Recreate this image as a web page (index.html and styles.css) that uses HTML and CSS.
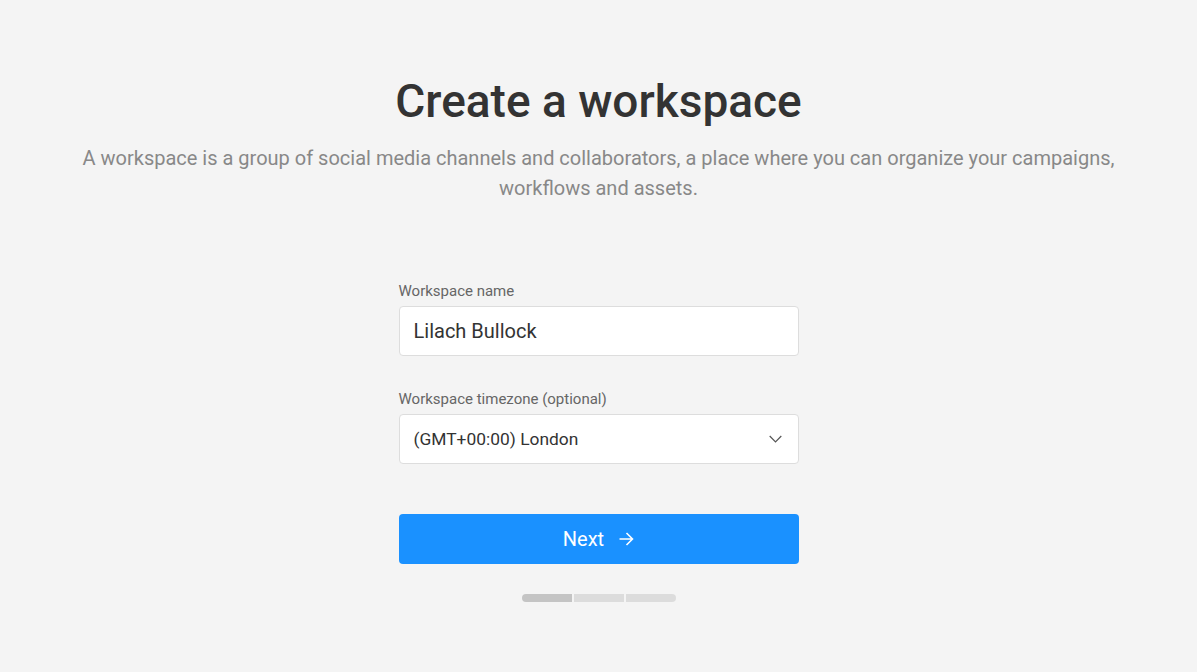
FILE: index.html
```html
<!DOCTYPE html>
<html lang="en">

<head>
    <meta charset="utf-8">
    <meta name="viewport" content="width=device-width, initial-scale=1.0">
    <title>Create a workspace</title>
    <link rel="stylesheet" href="styles.css">
</head>

<body>
    <div class="page">
        <h1>Create a workspace</h1>
        <p class="intro">A workspace is a group of social media channels and collaborators, a place where you can organize your campaigns, workflows and assets.</p>

        <form class="form">
            <div class="field">
                <label for="name">Workspace name</label>
                <input id="name" type="text" class="input" value="Lilach Bullock">
            </div>
            <div class="field">
                <label for="tz">Workspace timezone (optional)</label>
                <div class="select">
                    <span>(GMT+00:00) London</span>
                    <svg width="13" height="8" viewBox="0 0 13 8">
                        <path d="M0.7 1l5.8 6 5.8-6" fill="none" stroke="#555" stroke-width="1.2"/>
                    </svg>
                </div>
            </div>
            <button type="button" class="next">
                Next
                <svg width="16" height="16" viewBox="0 0 16 16">
                    <path d="M1.5 8h13M8.5 2l6 6-6 6" fill="none" stroke="#fff" stroke-width="1.6"/>
                </svg>
            </button>
        </form>

        <div class="steps">
            <span class="step done"></span>
            <span class="step"></span>
            <span class="step"></span>
        </div>
    </div>
</body>

</html>
```

FILE: styles.css
```css
* {
    margin: 0;
    padding: 0;
    box-sizing: border-box;
    font-family: Roboto, "Liberation Sans", sans-serif;
}

body {
    background: #f4f4f4;
    color: #333;
}

.page {
    display: flex;
    flex-direction: column;
    align-items: center;
    padding-top: 73px;
    text-align: center;
}

h1 {
    font-size: 46px;
    font-weight: 500;
    color: #333;
    line-height: 56px;
}

.intro {
    width: 1060px;
    margin-top: 14px;
    font-size: 20px;
    line-height: 30px;
    color: #888;
}

.form {
    width: 400px;
    margin-top: 79px;
    text-align: left;
}

.field {
    margin-bottom: 34px;
}

.field label {
    display: block;
    font-size: 15px;
    line-height: 18px;
    color: #666;
    margin-bottom: 6px;
}

.input,
.select {
    width: 100%;
    height: 50px;
    background: #fff;
    border: 1px solid #ddd;
    border-radius: 4px;
    padding: 0 14px;
    font-size: 20px;
    color: #333;
    outline: none;
}

.select {
    display: flex;
    align-items: center;
    justify-content: space-between;
    font-size: 17.4px;
}

.select svg {
    margin-right: 2px;
}

.next {
    width: 100%;
    height: 50px;
    margin-top: 50px;
    border: none;
    border-radius: 4px;
    background: #1a91ff;
    color: #fff;
    font-size: 20px;
    display: flex;
    align-items: center;
    justify-content: center;
    gap: 14px;
    cursor: pointer;
}

.steps {
    display: flex;
    gap: 2px;
    margin-top: 30px;
}

.step {
    width: 50px;
    height: 8px;
    background: #dcdcdc;
}

.step:first-child {
    border-radius: 4px 0 0 4px;
}

.step:last-child {
    border-radius: 0 4px 4px 0;
}

.step.done {
    background: #c4c4c4;
}
```
